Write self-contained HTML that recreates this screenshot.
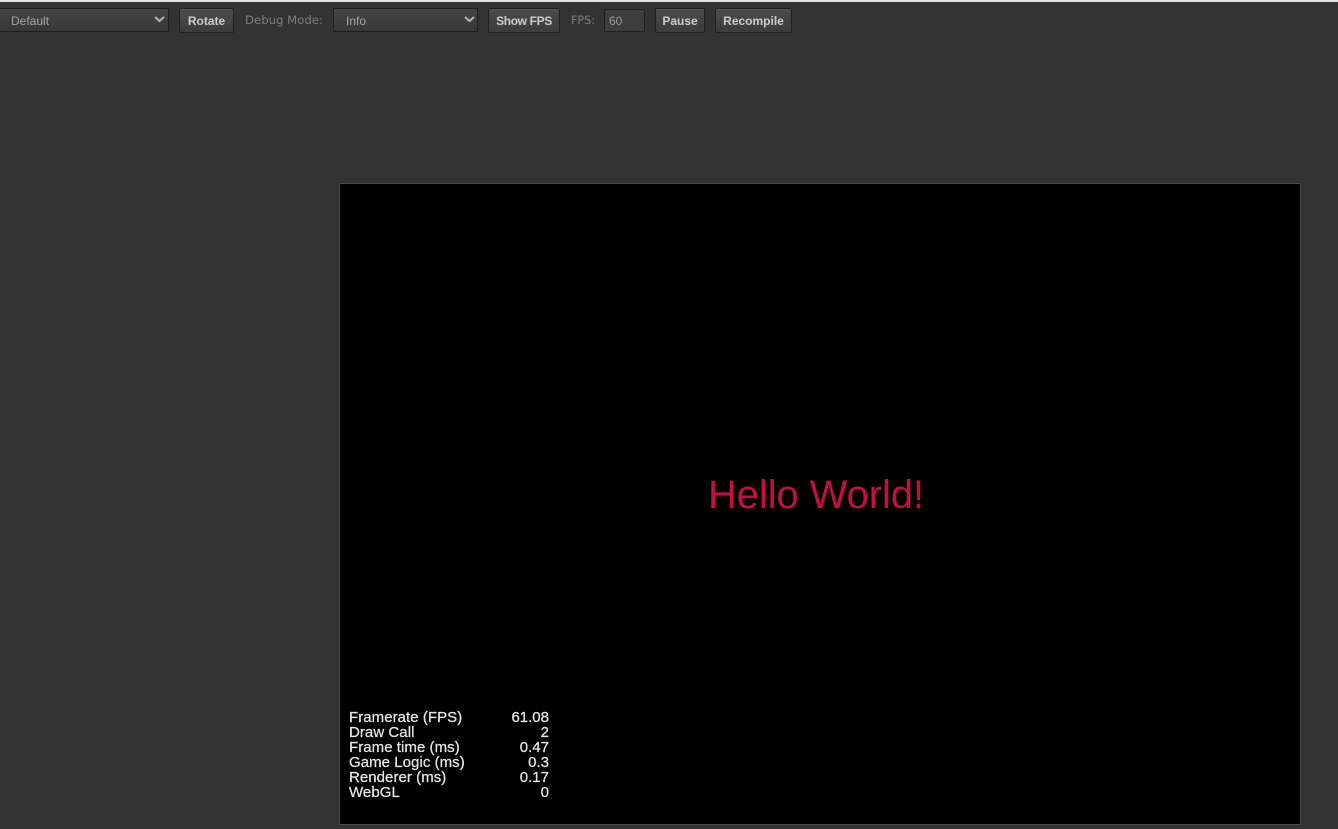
<!DOCTYPE html>
<html>
<head>
<meta charset="utf-8">
<style>
html,body{margin:0;padding:0;width:1338px;height:829px;overflow:hidden;background:#333333;}
body{position:relative;font-family:"Liberation Sans",sans-serif;}
.top{position:absolute;left:0;top:0;width:1338px;height:2px;background:#e4e4e4;}
.sel,.btn,.inp,.lab{position:absolute;box-sizing:border-box;white-space:nowrap;}
.sel{top:8px;height:24px;border:1px solid #1e1e1e;border-radius:2px;background:linear-gradient(#444444,#383838);color:#a6a6a6;font-size:12px;line-height:24px;}
.btn{top:8px;height:25px;border:1px solid #1f1f1f;border-radius:2px;background:linear-gradient(#4c4c4c,#3c3c3c);color:#cccccc;font-size:12px;font-weight:bold;line-height:24px;text-align:center;box-shadow:inset 0 1px 0 #565656;}
.lab{top:8px;height:24px;line-height:25px;color:#7e7e7e;font-family:"DejaVu Sans",sans-serif;font-size:11.7px;}
.inp{left:604px;top:9px;width:41px;height:23px;border:1px solid #1f1f1f;border-radius:2px;background:#3d3d3d;color:#9a9a9a;font-size:12px;line-height:22px;padding-left:4px;}
.sel svg{position:absolute;top:6px;}
#game{position:absolute;left:339px;top:183px;width:962px;height:642px;box-sizing:border-box;border:1px solid #4a4a4a;background:#000;}
#hello{position:absolute;left:708px;top:471px;font:39.8px/48px "Liberation Sans",Arial,sans-serif;color:#c70f3f;white-space:nowrap;}
.st{position:absolute;font:15px/15px "Liberation Sans",Arial,sans-serif;color:#e6e6e6;white-space:nowrap;-webkit-text-stroke:0.25px #e6e6e6;}
.n{left:349px;letter-spacing:0.05px;}
.v{right:789px;text-align:right;}
</style>
</head>
<body>
<div class="top"></div>
<div class="sel" style="left:-3px;width:172px;padding-left:13px;">Default
<svg style="left:156px" width="11" height="8" viewBox="0 0 11 8"><path d="M1 2 L5.500 6 L10 2" fill="none" stroke="#b4b4b4" stroke-width="2"/></svg></div>
<div class="btn" style="left:179px;width:55px;">Rotate</div>
<div class="lab" style="left:245px;">Debug Mode:</div>
<div class="sel" style="left:333px;width:145px;padding-left:12px;">Info
<svg style="left:130px" width="11" height="8" viewBox="0 0 11 8"><path d="M1 2 L5.500 6 L10 2" fill="none" stroke="#b4b4b4" stroke-width="2"/></svg></div>
<div class="btn" style="left:488px;width:72px;letter-spacing:-0.35px;">Show FPS</div>
<div class="lab" style="left:571px;font-size:11.2px;">FPS:</div>
<div class="inp">60</div>
<div class="btn" style="left:655px;width:50px;">Pause</div>
<div class="btn" style="left:715px;width:77px;">Recompile</div>

<div id="game"></div>
<div id="hello">Hello World!</div>

<div class="st n" style="top:710px">Framerate (FPS)</div>
<div class="st n" style="top:725px">Draw Call</div>
<div class="st n" style="top:740px">Frame time (ms)</div>
<div class="st n" style="top:755px">Game Logic (ms)</div>
<div class="st n" style="top:770px">Renderer (ms)</div>
<div class="st n" style="top:785px">WebGL</div>
<div class="st v" style="top:710px">61.08</div>
<div class="st v" style="top:725px">2</div>
<div class="st v" style="top:740px">0.47</div>
<div class="st v" style="top:755px">0.3</div>
<div class="st v" style="top:770px">0.17</div>
<div class="st v" style="top:785px">0</div>
</body>
</html>
